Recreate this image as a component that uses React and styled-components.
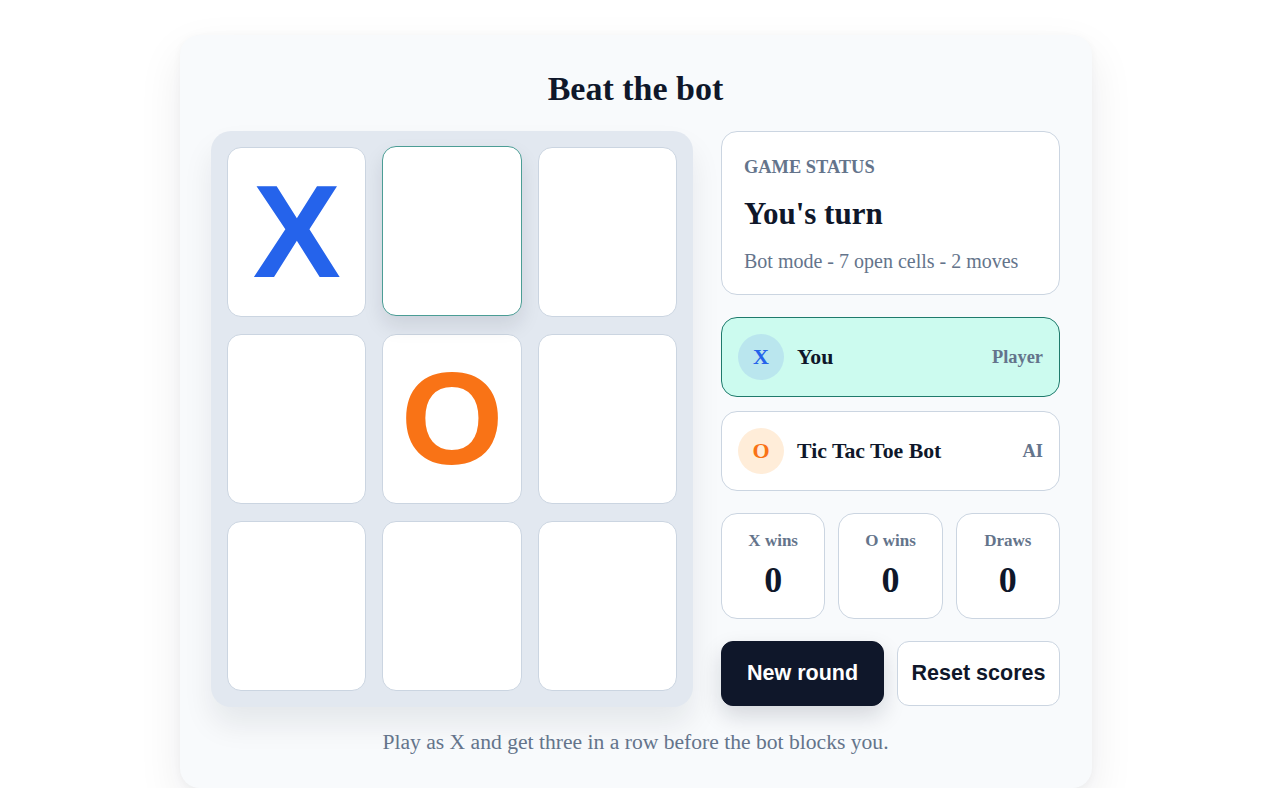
import { useState } from "react";
import styled, { createGlobalStyle } from "styled-components";

const GlobalStyle = createGlobalStyle`
  body {
    margin: 0;
    background: #ffffff;
    font-family: "Liberation Serif", "Times New Roman", serif;
    color: #0f172a;
  }
`;

const Page = styled.div`
  padding-top: 35px;
  display: flex;
  justify-content: center;
`;

const Card = styled.main`
  width: 912px;
  box-sizing: border-box;
  background: #f8fafc;
  border-radius: 20px;
  box-shadow: 0 18px 45px rgba(15, 23, 42, 0.08), 0 2px 8px rgba(15, 23, 42, 0.04);
  padding: 34px 32px 34px 31px;
  display: flex;
  flex-direction: column;
  align-items: stretch;
`;

const Title = styled.h1`
  margin: 0 0 22px;
  text-align: center;
  font-size: 34px;
  line-height: 40px;
  font-weight: 700;
  color: #0f172a;
`;

const Layout = styled.div`
  display: grid;
  grid-template-columns: 482px 1fr;
  gap: 28px;
`;

const Board = styled.div`
  background: #e2e8f0;
  border-radius: 20px;
  padding: 16px;
  display: grid;
  grid-template-columns: repeat(3, 1fr);
  grid-template-rows: repeat(3, 1fr);
  gap: 17px 16px;
  height: 576px;
  box-sizing: border-box;
  box-shadow: 0 18px 30px rgba(15, 23, 42, 0.08);
`;

const Cell = styled.button`
  background: #ffffff;
  border: 1.5px solid ${(p) => (p.$focused ? "#4b9d95" : "#cbd5e1")};
  border-radius: 14px;
  display: flex;
  align-items: center;
  justify-content: center;
  padding: 0;
  cursor: pointer;
  font-family: "Liberation Sans", Arial, sans-serif;
  font-weight: 700;
  font-size: 132px;
  line-height: 1;
  color: ${(p) => (p.$mark === "X" ? "#2563eb" : "#f97316")};
  transform: ${(p) => (p.$focused ? "translateY(-1px)" : "none")};
  box-shadow: ${(p) => (p.$focused ? "0 10px 20px rgba(15, 23, 42, 0.1)" : "none")};
`;

const Side = styled.aside`
  display: flex;
  flex-direction: column;
  gap: 22px;
`;

const Panel = styled.section`
  background: #ffffff;
  border: 1.5px solid #cbd5e1;
  border-radius: 16px;
`;

const StatusPanel = styled(Panel)`
  padding: 24px 22px 21px;
`;

const Eyebrow = styled.div`
  font-size: 18.4px;
  font-weight: 700;
  text-transform: uppercase;
  color: #64748b;
  line-height: 22px;
`;

const Turn = styled.div`
  margin-top: 18px;
  font-size: 31px;
  font-weight: 700;
  line-height: 36px;
  color: #0f172a;
`;

const Meta = styled.div`
  margin-top: 17px;
  font-size: 20px;
  line-height: 24px;
  color: #64748b;
`;

const Players = styled.div`
  display: flex;
  flex-direction: column;
  gap: 14px;
`;

const PlayerRow = styled.div`
  height: 80px;
  box-sizing: border-box;
  display: flex;
  align-items: center;
  gap: 13px;
  padding: 0 16px;
  border-radius: 16px;
  border: 1.5px solid ${(p) => (p.$active ? "#1f7a6c" : "#cbd5e1")};
  background: ${(p) => (p.$active ? "#ccfbef" : "#ffffff")};
`;

const Avatar = styled.div`
  width: 46px;
  height: 46px;
  border-radius: 50%;
  flex-shrink: 0;
  display: flex;
  align-items: center;
  justify-content: center;
  font-size: 22px;
  font-weight: 700;
  background: ${(p) => (p.$mark === "X" ? "#bae6ee" : "#ffedd9")};
  color: ${(p) => (p.$mark === "X" ? "#2563eb" : "#f97316")};
`;

const PlayerName = styled.div`
  flex: 1;
  font-size: 21.8px;
  font-weight: 700;
  color: #0f172a;
`;

const Role = styled.div`
  font-size: 18.4px;
  font-weight: 700;
  color: #64748b;
`;

const Scores = styled.div`
  display: grid;
  grid-template-columns: repeat(3, 1fr);
  gap: 13px;
`;

const ScoreCard = styled(Panel)`
  height: 106px;
  box-sizing: border-box;
  display: flex;
  flex-direction: column;
  align-items: center;
  padding-top: 16px;
`;

const ScoreLabel = styled.div`
  font-size: 17px;
  font-weight: 700;
  color: #64748b;
  line-height: 22px;
`;

const ScoreValue = styled.div`
  margin-top: 10px;
  font-size: 36px;
  font-weight: 700;
  line-height: 36px;
  color: #0f172a;
`;

const Actions = styled.div`
  display: grid;
  grid-template-columns: 1fr 1fr;
  gap: 13px;
`;

const Button = styled.button`
  height: 65px;
  border-radius: 12px;
  font-family: "Liberation Sans", Arial, sans-serif;
  font-size: 21.5px;
  font-weight: 700;
  cursor: pointer;
  border: 1.5px solid ${(p) => (p.$primary ? "#0f172a" : "#cbd5e1")};
  background: ${(p) => (p.$primary ? "#0f172a" : "#ffffff")};
  color: ${(p) => (p.$primary ? "#ffffff" : "#0f172a")};
  box-shadow: ${(p) => (p.$primary ? "0 10px 22px rgba(15, 23, 42, 0.15)" : "none")};
`;

const Hint = styled.p`
  margin: 23px 0 0;
  text-align: center;
  font-size: 21.6px;
  line-height: 24px;
  color: #64748b;
`;

const startBoard = ["X", null, null, null, "O", null, null, null, null];

export default function App() {
  const [cells] = useState(startBoard);
  const [hovered, setHovered] = useState(1);
  const open = cells.filter((c) => !c).length;
  const moves = cells.length - open;

  return (
    <>
      <GlobalStyle />
      <Page>
        <Card>
          <Title>Beat the bot</Title>
          <Layout>
            <Board>
              {cells.map((mark, i) => (
                <Cell
                  key={i}
                  $mark={mark}
                  $focused={hovered === i}
                  onMouseEnter={() => setHovered(i)}
                >
                  {mark}
                </Cell>
              ))}
            </Board>
            <Side>
              <StatusPanel>
                <Eyebrow>Game status</Eyebrow>
                <Turn>You's turn</Turn>
                <Meta>
                  Bot mode - {open} open cells - {moves} moves
                </Meta>
              </StatusPanel>
              <Players>
                <PlayerRow $active>
                  <Avatar $mark="X">X</Avatar>
                  <PlayerName>You</PlayerName>
                  <Role>Player</Role>
                </PlayerRow>
                <PlayerRow>
                  <Avatar $mark="O">O</Avatar>
                  <PlayerName>Tic Tac Toe Bot</PlayerName>
                  <Role>AI</Role>
                </PlayerRow>
              </Players>
              <Scores>
                <ScoreCard>
                  <ScoreLabel>X wins</ScoreLabel>
                  <ScoreValue>0</ScoreValue>
                </ScoreCard>
                <ScoreCard>
                  <ScoreLabel>O wins</ScoreLabel>
                  <ScoreValue>0</ScoreValue>
                </ScoreCard>
                <ScoreCard>
                  <ScoreLabel>Draws</ScoreLabel>
                  <ScoreValue>0</ScoreValue>
                </ScoreCard>
              </Scores>
              <Actions>
                <Button $primary>New round</Button>
                <Button>Reset scores</Button>
              </Actions>
            </Side>
          </Layout>
          <Hint>Play as X and get three in a row before the bot blocks you.</Hint>
        </Card>
      </Page>
    </>
  );
}
